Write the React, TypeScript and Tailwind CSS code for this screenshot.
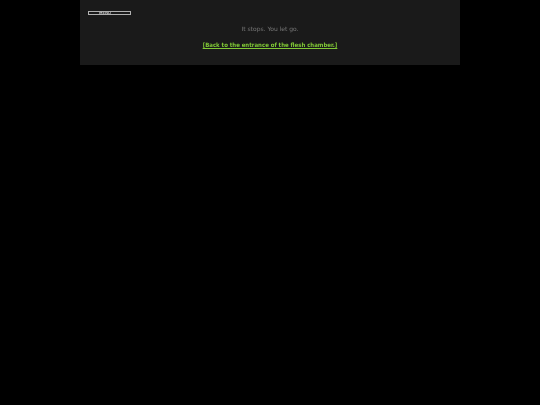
export default function App() {
  return (
    <div className="min-h-screen bg-black px-20 font-['DejaVu_Sans',sans-serif] text-[6px] leading-[8px] text-[#777777]">
      <main className="bg-[#1a1a1a] px-2 pt-[11px] pb-4 will-change-transform">
        {/* Menu */}
        <button className="flex h-1 w-[43px] items-center overflow-hidden border border-[#b0b0b0] pl-[10px] text-[4px] leading-none text-white">
          MENU
        </button>

        {/* Passage */}
        <div className="pt-[10px] text-center">
          <p>It stops. You let go.</p>
          <p className="mt-2 font-['DejaVu_Sans_Condensed','DejaVu_Sans',sans-serif] font-bold text-[#80c836]">
            <a href="#entrance" className="underline">[Back to the entrance of the flesh chamber.]</a>
          </p>
        </div>
      </main>
    </div>
  );
}
